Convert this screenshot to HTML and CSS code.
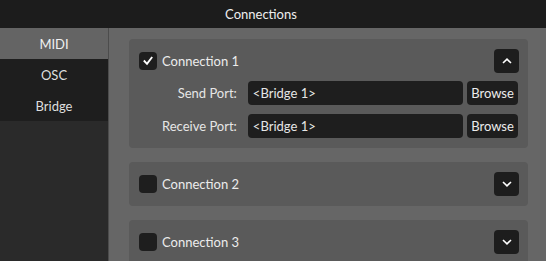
FILE: index.html
```html
<!DOCTYPE html>
<html>
<head>
<meta charset="utf-8">
<link rel="stylesheet" href="styles.css">
</head>
<body>
<div class="window">
  <header class="titlebar"><span class="title">Connections</span></header>
  <div class="main">
    <nav class="sidebar">
      <div class="nav-item active">MIDI</div>
      <div class="nav-item">OSC</div>
      <div class="nav-item">Bridge</div>
    </nav>
    <section class="content">
      <div class="panel">
        <div class="panel-head">
          <span class="checkbox checked">
            <svg width="10" height="10" viewBox="0 0 10 10"><path d="M1.5 5.2 L4 7.8 L8.6 1.8" fill="none" stroke="#fff" stroke-width="1.9" stroke-linecap="square" stroke-linejoin="miter"/></svg>
          </span>
          <span class="panel-title">Connection 1</span>
          <button class="toggle"><svg width="10" height="6" viewBox="0 0 10 6"><path d="M1 5 L5 1.2 L9 5" fill="none" stroke="#fff" stroke-width="1.6"/></svg></button>
        </div>
        <div class="form">
          <label class="form-label">Send Port:</label>
          <div class="field">&lt;Bridge 1&gt;</div>
          <button class="browse">Browse</button>
          <label class="form-label">Receive Port:</label>
          <div class="field">&lt;Bridge 1&gt;</div>
          <button class="browse">Browse</button>
        </div>
      </div>
      <div class="panel">
        <div class="panel-head">
          <span class="checkbox"></span>
          <span class="panel-title">Connection 2</span>
          <button class="toggle"><svg width="10" height="6" viewBox="0 0 10 6"><path d="M1 1 L5 4.8 L9 1" fill="none" stroke="#fff" stroke-width="1.6"/></svg></button>
        </div>
      </div>
      <div class="panel">
        <div class="panel-head">
          <span class="checkbox"></span>
          <span class="panel-title">Connection 3</span>
          <button class="toggle"><svg width="10" height="6" viewBox="0 0 10 6"><path d="M1 1 L5 4.8 L9 1" fill="none" stroke="#fff" stroke-width="1.6"/></svg></button>
        </div>
      </div>
    </section>
  </div>
</div>
</body>
</html>
```

FILE: styles.css
```css
* { box-sizing: border-box; }
html, body {
  margin: 0;
  padding: 0;
  width: 546px;
  height: 261px;
  overflow: hidden;
  background: #666666;
}
body {
  font-family: Lato, "Open Sans", "DejaVu Sans", sans-serif;
  font-size: 13px;
  color: #e6e6e6;
}
.window {
  display: flex;
  flex-direction: column;
  height: 261px;
}
.titlebar {
  height: 28px;
  background: #1c1c1c;
  display: flex;
  align-items: center;
  justify-content: center;
  padding-right: 24px;
  flex: none;
}
.title {
  font-size: 13px;
  color: #eeeeee;
}
.main {
  flex: 1;
  display: flex;
  min-height: 0;
}
.sidebar {
  width: 109px;
  flex: none;
  background: #2a2a2a;
  border-right: 1px solid #4c4c4c;
  display: flex;
  flex-direction: column;
}
.nav-item {
  height: 31px;
  display: flex;
  align-items: center;
  justify-content: center;
  background: #1e1e1e;
  color: #dedede;
}
.nav-item.active {
  background: #646464;
  color: #f0f0f0;
}
.content {
  flex: 1;
  background: #666666;
  padding: 11px 18px 0 20px;
  display: flex;
  flex-direction: column;
  gap: 14px;
  overflow: hidden;
}
.panel {
  background: #5a5a5a;
  border-radius: 4px;
  padding: 10px 9px 10px 10px;
  flex: none;
}
.panel-head {
  display: flex;
  align-items: center;
  height: 24px;
}
.checkbox {
  width: 18px;
  height: 18px;
  border-radius: 4px;
  background: #1e1e1e;
  display: flex;
  align-items: center;
  justify-content: center;
  margin-right: 5px;
  flex: none;
}
.panel-title {
  flex: 1;
  color: #ececec;
}
.toggle {
  width: 25px;
  height: 24px;
  border: none;
  border-radius: 4px;
  background: #1d1d1d;
  display: flex;
  align-items: center;
  justify-content: center;
  padding: 0;
}
.form {
  display: grid;
  grid-template-columns: auto 1fr 51px;
  column-gap: 4px;
  row-gap: 9px;
  margin-top: 8px;
  margin-left: 23px;
  margin-right: 1px;
}
.form-label {
  text-align: right;
  align-self: center;
  margin-right: 7px;
  color: #e6e6e6;
}
.field {
  height: 24px;
  background: #1e1e1e;
  border-radius: 4px;
  display: flex;
  align-items: center;
  padding-left: 5px;
  color: #e6e6e6;
}
.browse {
  height: 24px;
  border: none;
  border-radius: 4px;
  background: #1e1e1e;
  color: #ececec;
  font-family: inherit;
  font-size: 13px;
  padding: 0;
}
```
